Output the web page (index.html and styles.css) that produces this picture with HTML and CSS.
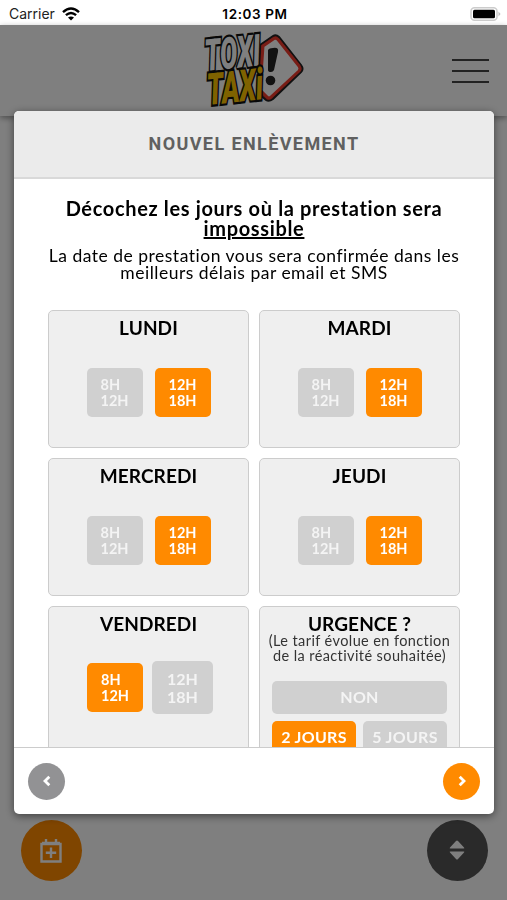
FILE: index.html
```
<!DOCTYPE html>
<html lang="fr">
<head>
    <meta charset="UTF-8">
    <meta name="viewport" content="width=device-width, initial-scale=1.0">
    <title>Toxi Taxi</title>
    <link rel="stylesheet" href="styles.css">
</head>
<body>

<div class="status-bar">
    <div class="carrier">
        <span>Carrier</span>
        <svg class="wifi" viewBox="0 0 18 14">
            <path d="M1 5.2 Q9 -2.2 17 5.2" />
            <path d="M3.9 8.2 Q9 3.6 14.1 8.2" />
            <path class="dot" d="M6 10.6 Q9 8.2 12 10.6 L9 13.6 Z" />
        </svg>
    </div>
    <div class="clock">12:03 PM</div>
    <svg class="battery" viewBox="0 0 31 14">
        <rect class="shell" x="1" y="0.8" width="26" height="12.4" rx="3.5" />
        <rect x="3" y="2.8" width="22" height="8.4" rx="1.5" />
        <path class="tip" d="M28.5 4.5 L30.5 7 L28.5 9.5 Z" />
    </svg>
</div>

<div class="page">
    <header class="navbar">
        <svg class="logo" viewBox="0 0 100 76">
            <path class="sign-edge" d="M56 12 L69 3 Q72 1 75 4 L97 32 Q100 36 97 39 L69 66 Q65 69 62 67 L54 60 Z" />
            <path class="sign" d="M59 13 L70 5.5 Q72 4.5 74 6.5 L95 33 Q97 36 95 38 L67 64 Q65 66 63 64 L56 57 Z" />
            <path class="mark" d="M64 17 Q65 15 69 15 Q75 14 74 19 L70 37 Q69 39 67 39 Q64 39 64 37 Z" />
            <circle class="mark" cx="66.5" cy="47.5" r="4.8" />
            <g transform="rotate(-6) skewX(-2)">
                <text class="toxi" x="-1" y="38" textLength="56" lengthAdjust="spacingAndGlyphs">TOXI</text>
                <text class="taxi" x="-1" y="72" textLength="56" lengthAdjust="spacingAndGlyphs">TAXi</text>
            </g>
        </svg>
        <div class="burger">
            <span></span>
            <span></span>
            <span></span>
        </div>
    </header>

    <div class="fab-row">
        <div class="fab fab-add">
            <svg width="22" height="25" viewBox="0 0 22 25">
                <path class="outline" d="M1.5 6 H20.5 V23.5 H1.5 Z M11 9.5 V20 M5.8 14.7 H16.2" />
                <path class="outline" d="M6 1 V5 M16 1 V5 M2 5 H20" />
            </svg>
        </div>
        <div class="fab fab-sort">
            <svg width="16" height="20" viewBox="0 0 16 20">
                <path d="M1.5 8.5 Q0 8.5 1 7.5 L7 1 Q8 0 9 1 L15 7.5 Q16 8.5 14.5 8.5 Z" />
                <path d="M1.5 11.5 Q0 11.5 1 12.5 L7 19 Q8 20 9 19 L15 12.5 Q16 11.5 14.5 11.5 Z" />
            </svg>
        </div>
    </div>
</div>

<div class="overlay">
    <div class="modal">
        <div class="modal-header">NOUVEL ENLÈVEMENT</div>

        <div class="modal-body">
            <h1>Décochez les jours où la prestation sera<br><u>impossible</u></h1>
            <p class="info">La date de prestation vous sera confirmée dans les<br>meilleurs délais par email et SMS</p>

            <div class="days">
                <div class="day">
                    <h2>LUNDI</h2>
                    <div class="slots">
                        <div class="slot"><span>8H<br>12H</span></div>
                        <div class="slot on"><span>12H<br>18H</span></div>
                    </div>
                </div>
                <div class="day">
                    <h2>MARDI</h2>
                    <div class="slots">
                        <div class="slot"><span>8H<br>12H</span></div>
                        <div class="slot on"><span>12H<br>18H</span></div>
                    </div>
                </div>
                <div class="day">
                    <h2>MERCREDI</h2>
                    <div class="slots">
                        <div class="slot"><span>8H<br>12H</span></div>
                        <div class="slot on"><span>12H<br>18H</span></div>
                    </div>
                </div>
                <div class="day">
                    <h2>JEUDI</h2>
                    <div class="slots">
                        <div class="slot"><span>8H<br>12H</span></div>
                        <div class="slot on"><span>12H<br>18H</span></div>
                    </div>
                </div>
                <div class="day tall">
                    <h2>VENDREDI</h2>
                    <div class="slots">
                        <div class="slot on"><span>8H<br>12H</span></div>
                        <div class="slot pressed"><span>12H<br>18H</span></div>
                    </div>
                </div>
                <div class="day tall">
                    <h2>URGENCE ?</h2>
                    <p>(Le tarif évolue en fonction<br>de la réactivité souhaitée)</p>
                    <div class="choices">
                        <div class="choice wide">NON</div>
                        <div class="choice on">2 JOURS</div>
                        <div class="choice">5 JOURS</div>
                    </div>
                </div>
            </div>
        </div>

        <div class="modal-footer">
            <div class="round back">
                <svg width="8" height="12" viewBox="0 0 8 12"><path d="M6.3 1.8 L2 6 L6.3 10.2" /></svg>
            </div>
            <div class="round next">
                <svg width="8" height="12" viewBox="0 0 8 12"><path d="M1.7 1.8 L6 6 L1.7 10.2" /></svg>
            </div>
        </div>
    </div>
</div>

</body>
</html>
```
FILE: styles.css
```
* {
    box-sizing: border-box;
}
body {
    font-family: Lato, "Noto Sans", sans-serif;
    margin: 0;
    height: 900px;
    overflow: hidden;
    background-color: #fff;
    color: #000;
}
h1, h2, p {
    margin: 0;
}

/* Status bar */
.status-bar {
    display: grid;
    grid-template-columns: 1fr auto 1fr;
    align-items: center;
    height: 25px;
    padding: 2px 6px 0 9px;
    font-family: Inter, sans-serif;
    font-size: 14px;
}
.carrier {
    display: flex;
    align-items: center;
    gap: 7px;
    color: #222;
}
.wifi {
    width: 18px;
    height: 14px;
    fill: none;
    stroke: #000;
    stroke-width: 2.4;
}
.wifi .dot {
    fill: #000;
    stroke: none;
}
.clock {
    font-weight: 600;
    font-size: 13.5px;
    letter-spacing: 0.6px;
}
.battery {
    width: 31px;
    height: 14px;
    justify-self: end;
}
.battery .shell {
    fill: #fff;
    stroke: #ccc;
    stroke-width: 1.5;
}
.battery .tip {
    fill: #bbb;
}

/* Page behind the modal */
.page {
    display: flex;
    flex-direction: column;
    justify-content: space-between;
    height: 875px;
}
.navbar {
    display: grid;
    grid-template-columns: 1fr auto 1fr;
    align-items: center;
    height: 91px;
    padding: 0 18px;
    box-shadow: 0 2px 6px rgba(0,0,0,0.4);
}
.logo {
    grid-column: 2;
    width: 100px;
    height: 76px;
    overflow: visible;
}
.sign-edge {
    fill: #c62b20;
    stroke: #222;
    stroke-width: 2;
}
.sign {
    fill: #fff;
    stroke: #f03a2c;
    stroke-width: 3;
}
.mark {
    fill: #222;
}
.toxi, .taxi {
    font-family: Roboto, "Liberation Sans", sans-serif;
    font-weight: 900;
    font-style: italic;
    font-size: 44px;
    stroke: #111;
    stroke-width: 4.5;
    stroke-linejoin: miter;
    stroke-miterlimit: 2;
    paint-order: stroke;
}
.toxi {
    fill: #fff;
}
.taxi {
    fill: #ffc400;
}
.burger {
    display: flex;
    flex-direction: column;
    justify-self: end;
    gap: 9px;
    width: 37px;
}
.burger span {
    height: 2px;
    background-color: #444;
}
.fab-row {
    display: flex;
    justify-content: space-between;
    padding: 0 19.5px 19.5px 20.5px;
}
.fab {
    display: flex;
    align-items: center;
    justify-content: center;
    width: 61px;
    height: 61px;
    border-radius: 50%;
    background-color: #ff8a00;
    fill: #fff;
}
.fab-sort {
    background-color: #555;
}
.outline {
    fill: none;
    stroke: #fff;
    stroke-width: 2.4;
}

/* Modal */
.overlay {
    position: fixed;
    top: 25px;
    right: 0;
    bottom: 0;
    left: 0;
    display: flex;
    align-items: flex-start;
    justify-content: center;
    padding: 86px 0 0 1px;
    background-color: rgba(0,0,0,0.5);
}
.modal {
    display: flex;
    flex-direction: column;
    width: 480px;
    height: 703px;
    overflow: hidden;
    border-radius: 5px;
    background-color: #fff;
    box-shadow: 0 2px 9px rgba(0,0,0,0.5);
}
.modal-header {
    flex: none;
    height: 68px;
    border-bottom: 2px solid #d9d9d9;
    background-color: #ebebeb;
    color: #606060;
    font-family: Roboto, sans-serif;
    font-size: 18px;
    font-weight: bold;
    letter-spacing: 1.4px;
    line-height: 66px;
    text-align: center;
}
.modal-body {
    flex: 1;
    min-height: 0;
    overflow: hidden;
    padding: 19px 34px 0;
    text-align: center;
}
h1 {
    font-size: 20px;
    letter-spacing: 0.65px;
    line-height: 20px;
    white-space: nowrap;
}
.info {
    margin-top: 9px;
    font-size: 17.5px;
    letter-spacing: 0.5px;
    line-height: 17px;
    white-space: nowrap;
}
.days {
    display: grid;
    grid-template-columns: 1fr 1fr;
    grid-auto-rows: 138px;
    gap: 10px;
    margin-top: 29px;
}
.day {
    padding-top: 7px;
    border: 1.5px solid #ccc;
    border-radius: 5px;
    background-color: #efefef;
}
.tall {
    height: 190px;
}
h2 {
    font-size: 19px;
    letter-spacing: 0.1px;
    line-height: 20px;
}
.slots {
    display: flex;
    align-items: center;
    justify-content: center;
    height: 61px;
    gap: 12px;
    margin-top: 24px;
}
.tall .slots {
    margin-top: 23px;
}
.slot {
    display: flex;
    align-items: center;
    justify-content: center;
    width: 56px;
    height: 49px;
    border-radius: 5px;
    background-color: #d0d0d0;
    color: #f4f4f4;
    font-size: 14.5px;
    font-weight: bold;
    line-height: 16px;
    text-align: left;
}
.pressed {
    width: 61px;
    height: 53px;
    margin: 0 -3px;
    font-size: 16px;
    line-height: 17.5px;
}
.on {
    background-color: #ff8a00;
    color: #fff;
}
.tall p {
    margin-top: -1px;
    color: #333;
    font-size: 14.5px;
    letter-spacing: 0.4px;
    line-height: 15px;
    white-space: nowrap;
}
.choices {
    display: grid;
    grid-template-columns: 1fr 1fr;
    gap: 7px;
    margin: 18px 12px 0;
}
.choice {
    height: 33px;
    border-radius: 5px;
    background-color: #d0d0d0;
    color: #f4f4f4;
    font-size: 16px;
    font-weight: bold;
    letter-spacing: 0.3px;
    line-height: 32px;
}
.choice.on {
    background-color: #ff8a00;
    color: #fff;
}
.wide {
    grid-column: 1 / 3;
}
.modal-footer {
    display: flex;
    flex: none;
    align-items: center;
    justify-content: space-between;
    height: 67px;
    padding: 0 14px;
    border-top: 1.5px solid #ccc;
}
.round {
    display: flex;
    align-items: center;
    justify-content: center;
    width: 37px;
    height: 37px;
    border-radius: 50%;
    background-color: #ff8a00;
    fill: none;
    stroke: #fff;
    stroke-width: 2.8;
}
.back {
    background-color: #929294;
}
```
